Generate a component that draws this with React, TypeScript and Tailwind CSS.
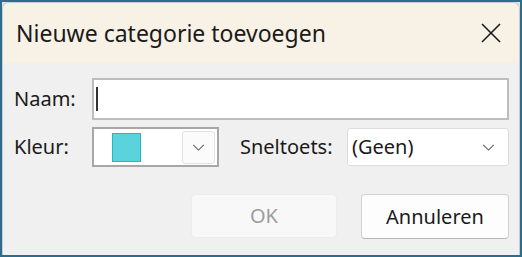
import React from 'react';

const font = { fontFamily: '"Noto Sans", "Open Sans", sans-serif' };

function Chevron({ className }: { className?: string }) {
  return (
    <svg viewBox="0 0 14 8" className={className} fill="none" stroke="#5f5f5f" strokeWidth="1.2">
      <polyline points="1,1 7,7 13,1" />
    </svg>
  );
}

export default function App() {
  return (
    <div className="w-[522px] h-[257px] bg-[#dfe3e6] border-2 border-[#2c6d8d] overflow-hidden" style={font}>
      <div className="h-full flex flex-col rounded-t-[7px] border border-[#c9ccce] border-b-0 overflow-hidden bg-[#f0f0f0]">
        <div className="h-[60px] shrink-0 bg-[#f8f1e6] flex items-center pl-[13px] pr-[18px]">
          <span className="text-[23px] leading-none text-[#1a1a1a] flex-1">Nieuwe categorie toevoegen</span>
          <svg viewBox="0 0 20 20" className="w-[20px] h-[20px]" stroke="#1a1a1a" strokeWidth="1.6" fill="none">
            <line x1="1" y1="1" x2="19" y2="19" />
            <line x1="19" y1="1" x2="1" y2="19" />
          </svg>
        </div>
        <div className="flex-1 flex flex-col pl-[11px] pr-[10px] pt-[15px]">
          <div className="flex items-center">
            <span className="w-[78px] text-[20px] text-[#1a1a1a]">Naam:</span>
            <div className="flex-1 h-[42px] bg-white border-2 border-[#bdbdbd] flex items-center pl-[2px]">
              <div className="w-[2px] h-[24px] bg-[#333]" />
            </div>
          </div>
          <div className="flex items-center mt-[7px]">
            <span className="w-[78px] text-[20px] text-[#1a1a1a]">Kleur:</span>
            <div className="w-[127px] h-[40px] bg-white border-2 border-[#a7a7a7] flex items-center pl-[18px] pr-[2px]">
              <div className="w-[29px] h-[29px] bg-[#5ad3dc] border border-[#22b9c5]" />
              <div className="flex-1" />
              <div className="w-[33px] h-[33px] rounded-[3px] bg-[#fbfbfb] border border-[#e2e2e2] flex items-center justify-center">
                <Chevron className="w-[13px] h-[7px]" />
              </div>
            </div>
            <span className="ml-[21px] w-[107px] text-[20px] text-[#1a1a1a]">Sneltoets:</span>
            <div className="flex-1 h-[38px] bg-white border border-[#dcdcdc] rounded-[3px] flex items-center pl-[4px] pr-[13px]">
              <span className="flex-1 text-[20px] text-[#1a1a1a]">(Geen)</span>
              <Chevron className="w-[13px] h-[7px]" />
            </div>
          </div>
          <div className="flex justify-end mt-[27px] gap-[24px]">
            <div className="w-[146px] h-[44px] rounded-[4px] bg-[#f8f8f8] border border-[#ececec] flex items-center justify-center text-[20px] text-[#9c9c9c]">
              OK
            </div>
            <div className="w-[148px] h-[45px] rounded-[4px] bg-[#fdfdfd] border border-[#d2d2d2] border-b-[#b8b8b8] flex items-center justify-center text-[20px] text-[#1a1a1a]">
              Annuleren
            </div>
          </div>
        </div>
      </div>
    </div>
  );
}
